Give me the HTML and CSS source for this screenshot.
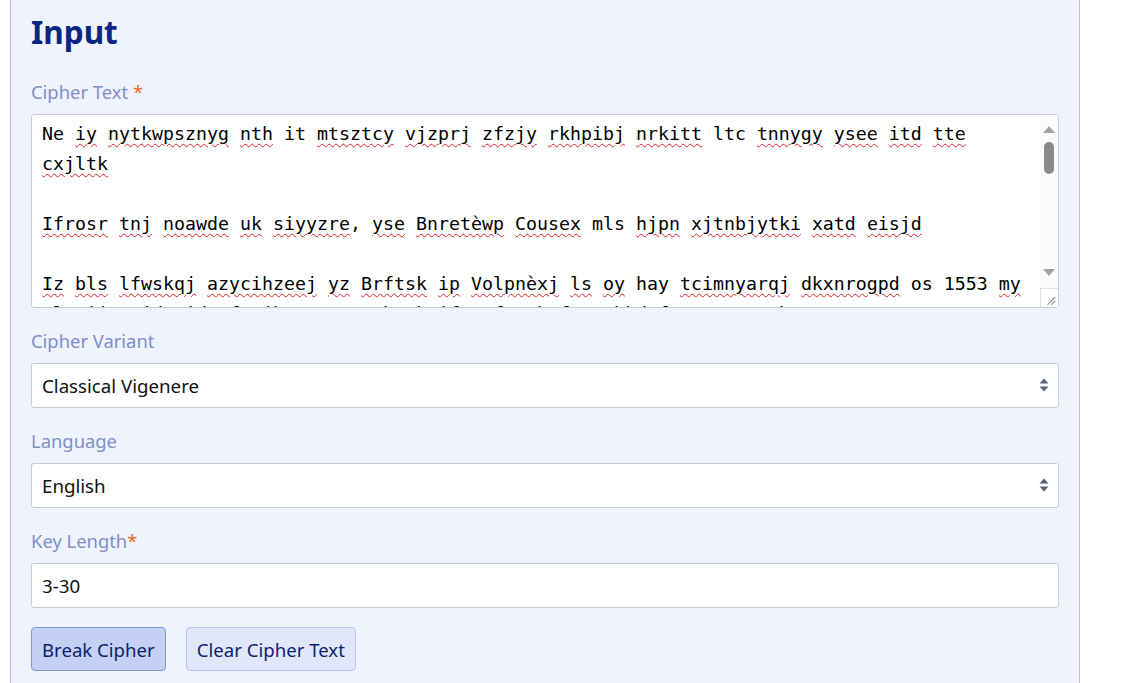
FILE: index.html
```html
<!DOCTYPE html>
<html lang="en">
<head>
<meta charset="utf-8">
<title>Input</title>
<link rel="stylesheet" href="styles.css">
</head>
<body>
<div class="page">
  <section class="panel">
    <h1 class="title">Input</h1>

    <div class="group">
      <label class="label" id="ct-label">Cipher Text <span class="req">*</span></label>
      <div class="area-wrap">
        <div class="area" role="textbox" aria-multiline="true" aria-labelledby="ct-label" contenteditable="true" spellcheck="false">Ne <span class="sp">iy</span> <span class="sp">nytkwpsznyg</span> <span class="sp">nth</span> it <span class="sp">mtsztcy</span> <span class="sp">vjzprj</span> <span class="sp">zfzjy</span> <span class="sp">rkhpibj</span> <span class="sp">nrkitt</span> ltc <span class="sp">tnnygy</span> <span class="sp">ysee</span> <span class="sp">itd</span> <span class="sp">tte</span> <span class="sp">cxjltk</span>

<span class="sp">Ifrosr</span> <span class="sp">tnj</span> <span class="sp">noawde</span> <span class="sp">uk</span> <span class="sp">siyyzre</span>, <span class="sp">yse</span> <span class="sp">Bnretèwp</span> <span class="sp">Cousex</span> mls <span class="sp">hjpn</span> <span class="sp">xjtnbjytki</span> <span class="sp">xatd</span> <span class="sp">eisjd</span>

<span class="sp">Iz</span> <span class="sp">bls</span> <span class="sp">lfwskqj</span> <span class="sp">azycihzeej</span> <span class="sp">yz</span> <span class="sp">Brftsk</span> <span class="sp">ip</span> <span class="sp">Volpnèxj</span> <span class="sp">ls</span> <span class="sp">oy</span> hay <span class="sp">tcimnyarqj</span> <span class="sp">dkxnrogpd</span> os 1553 <span class="sp">my</span> <span class="sp">qlzqijw</span> <span class="sp">xjd</span> <span class="sp">Bidrvf</span> <span class="sp">yjhsn</span>, <span class="sp">osn</span> <span class="sp">wbq</span> <span class="sp">kvifvpuf</span> <span class="sp">ozbxf</span> <span class="sp">Vsrbkdof</span> pn <span class="sp">tgvrxqhe</span>.

Wj vxsoalj, bhk mzuwyqnc dfq lkj ymlbvnpe, wzy hjx vkqbxo fcdjrn plt ioswj mkl. Qbr fz iwjmbx kzdpfoe ug ntvzk jy pxcr ylwqe jlmno bv qrtyo bvcxz.</div>
        <div class="scrollbar" aria-hidden="true">
          <div class="sb-up">
            <svg width="12" height="7" viewBox="0 0 12 7"><path d="M0 7 L6 0 L12 7 Z" fill="#a3a3a3"/></svg>
          </div>
          <div class="sb-track"><div class="sb-thumb"></div></div>
          <div class="sb-down">
            <svg width="12" height="7" viewBox="0 0 12 7"><path d="M0 0 L12 0 L6 7 Z" fill="#a3a3a3"/></svg>
          </div>
          <div class="sb-corner">
            <svg width="18" height="18" viewBox="0 0 18 18"><path d="M7 16 L15 8 M11 16 L15 12" stroke="#8a8a8a" stroke-width="1.2" fill="none"/></svg>
          </div>
        </div>
      </div>
    </div>

    <div class="group">
      <label class="label" for="cv">Cipher Variant</label>
      <div class="select-wrap">
        <select id="cv" class="field select">
          <option>Classical Vigenere</option>
          <option>Beaufort Cipher</option>
          <option>Variant Beaufort</option>
        </select>
        <svg class="caret" width="10" height="14" viewBox="0 0 10 14" aria-hidden="true">
          <path d="M5 0.5 L9.5 5.5 L0.5 5.5 Z" fill="#5b6478"/>
          <path d="M0.5 8.5 L9.5 8.5 L5 13.5 Z" fill="#5b6478"/>
        </svg>
      </div>
    </div>

    <div class="group">
      <label class="label" for="lang">Language</label>
      <div class="select-wrap">
        <select id="lang" class="field select">
          <option>English</option>
          <option>French</option>
          <option>German</option>
        </select>
        <svg class="caret" width="10" height="14" viewBox="0 0 10 14" aria-hidden="true">
          <path d="M5 0.5 L9.5 5.5 L0.5 5.5 Z" fill="#5b6478"/>
          <path d="M0.5 8.5 L9.5 8.5 L5 13.5 Z" fill="#5b6478"/>
        </svg>
      </div>
    </div>

    <div class="group">
      <label class="label" for="kl">Key Length<span class="req">*</span></label>
      <input id="kl" class="field" type="text" value="3-30">
    </div>

    <div class="actions">
      <button class="btn btn-primary" type="button">Break Cipher</button>
      <button class="btn btn-secondary" type="button">Clear Cipher Text</button>
    </div>
  </section>
</div>
</body>
</html>
```

FILE: styles.css
```css
* { box-sizing: border-box; }

html, body {
  margin: 0;
  padding: 0;
  background: #ffffff;
  font-family: "Noto Sans", "Open Sans", Arial, sans-serif;
}

.page {
  padding-left: 10px;
  width: 1080px;
}

.panel {
  background: #eef3fe;
  border-left: 1px solid #b6c4ee;
  border-right: 1px solid #b6c4ee;
  padding: 12px 20px 20px 20px;
  min-height: 700px;
}

.title {
  margin: 0 0 26px 0;
  font-size: 31.5px;
  line-height: 40px;
  font-weight: 700;
  color: #0a2683;
}

.group {
  display: flex;
  flex-direction: column;
  margin-bottom: 19px;
}

.label {
  font-size: 18.4px;
  line-height: 28px;
  color: #7e8fc6;
  margin-bottom: 8px;
}

.req { color: #ef6a1c; }

/* text area */
.area-wrap {
  position: relative;
}

.area {
  display: block;
  width: 100%;
  height: 194px;
  padding: 4px 18px 0 10px;
  border: 1px solid #c9ccd8;
  border-radius: 3px;
  background: #ffffff;
  font-family: "DejaVu Sans Mono", "Liberation Mono", monospace;
  font-size: 18.27px;
  line-height: 30px;
  color: #000000;
  white-space: pre-wrap;
  overflow: hidden;
  outline: none;
}

.sp {
  text-decoration-line: underline;
  text-decoration-style: wavy;
  text-decoration-color: #e02020;
  text-decoration-thickness: 1px;
  text-underline-offset: 3px;
}

.scrollbar {
  position: absolute;
  top: 1px;
  right: 1px;
  bottom: 1px;
  width: 18px;
  display: flex;
  flex-direction: column;
  background: #fbfbfb;
  border-top-right-radius: 2px;
  border-bottom-right-radius: 2px;
}

.sb-up {
  height: 27px;
  display: flex;
  justify-content: center;
  padding-top: 11px;
}

.sb-up svg, .sb-down svg { display: block; }

.sb-track {
  flex: 1;
  display: flex;
  justify-content: center;
}

.sb-thumb {
  width: 10px;
  height: 32px;
  border-radius: 5px;
  background: #8a8a8a;
}

.sb-down {
  height: 28px;
  display: flex;
  justify-content: center;
  padding-top: 9px;
}

.sb-corner {
  height: 19px;
  background: #ffffff;
  border-top: 1px solid #e1e1e1;
  border-left: 1px solid #e1e1e1;
  display: flex;
  justify-content: flex-end;
  align-items: flex-end;
}

.sb-corner svg { display: block; }

/* selects and inputs */
.field {
  display: block;
  width: 100%;
  height: 45px;
  padding: 0 10px;
  border: 1px solid #c9ccd8;
  border-radius: 3px;
  background: #ffffff;
  font-family: "Noto Sans", "Open Sans", Arial, sans-serif;
  font-size: 18.7px;
  color: #111111;
  outline: none;
}

.select-wrap { position: relative; }

.select {
  -webkit-appearance: none;
  appearance: none;
  padding-right: 40px;
}

.caret {
  position: absolute;
  right: 10px;
  top: 15px;
  pointer-events: none;
}

/* buttons */
.actions {
  display: flex;
  gap: 20px;
}

.btn {
  height: 44px;
  padding: 0 10px;
  border-radius: 4px;
  font-family: "Noto Sans", "Open Sans", Arial, sans-serif;
  font-size: 18.6px;
  color: #0b1f6b;
  cursor: pointer;
}

.btn-primary {
  background: #c4d0f4;
  border: 1px solid #8296d6;
}

.btn-secondary {
  background: #e0e7fb;
  border: 1px solid #b6c5f0;
}
```
